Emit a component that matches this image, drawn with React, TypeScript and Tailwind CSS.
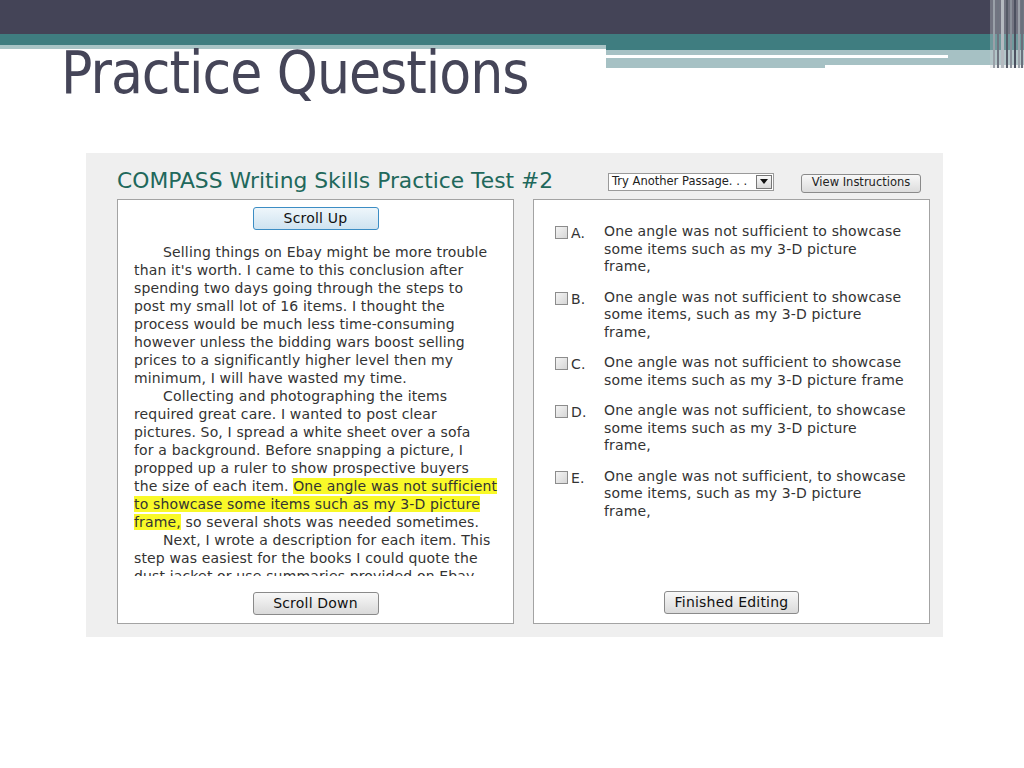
import React from "react";

const passage: { text: React.ReactNode; indent?: boolean }[] = [
  { text: "Selling things on Ebay might be more trouble", indent: true },
  { text: "than it's worth. I came to this conclusion after" },
  { text: "spending two days going through the steps to" },
  { text: "post my small lot of 16 items. I thought the" },
  { text: "process would be much less time-consuming" },
  { text: "however unless the bidding wars boost selling" },
  { text: "prices to a significantly higher level then my" },
  { text: "minimum, I will have wasted my time." },
  { text: "Collecting and photographing the items", indent: true },
  { text: "required great care. I wanted to post clear" },
  { text: "pictures. So, I spread a white sheet over a sofa" },
  { text: "for a background. Before snapping a picture, I" },
  { text: "propped up a ruler to show prospective buyers" },
  {
    text: (
      <>
        the size of each item.{" "}
        <span className="bg-[#f9f928]">One angle was not sufficient</span>
      </>
    ),
  },
  { text: <span className="bg-[#f9f928]">to showcase some items such as my 3-D picture</span> },
  {
    text: (
      <>
        <span className="bg-[#f9f928]">frame,</span> so several shots was needed sometimes.
      </>
    ),
  },
  { text: "Next, I wrote a description for each item. This", indent: true },
  { text: "step was easiest for the books I could quote the" },
  { text: "dust jacket or use summaries provided on Ebay" },
];

const options: { letter: string; lines: string[] }[] = [
  { letter: "A.", lines: ["One angle was not sufficient to showcase", "some items such as my 3-D picture", "frame,"] },
  { letter: "B.", lines: ["One angle was not sufficient to showcase", "some items, such as my 3-D picture", "frame,"] },
  { letter: "C.", lines: ["One angle was not sufficient to showcase", "some items such as my 3-D picture frame"] },
  { letter: "D.", lines: ["One angle was not sufficient, to showcase", "some items such as my 3-D picture", "frame,"] },
  { letter: "E.", lines: ["One angle was not sufficient, to showcase", "some items, such as my 3-D picture", "frame,"] },
];

function Btn({ children, w, focused }: { children: React.ReactNode; w: string; focused?: boolean }) {
  return (
    <div
      className={`${w} h-[23px] flex items-center justify-center rounded-[3px] border text-[14px] tracking-[0.2px] text-[#111] ${
        focused
          ? "border-[#3c8dc4] bg-gradient-to-b from-[#eef6fb] to-[#cfe3f0]"
          : "border-[#8a8a8a] bg-gradient-to-b from-[#f8f8f8] to-[#dadada]"
      }`}
    >
      {children}
    </div>
  );
}

export default function App() {
  return (
    <div
      className="w-[1024px] h-[768px] bg-white relative overflow-hidden"
      style={{ fontFamily: '"DejaVu Sans", Verdana, sans-serif' }}
    >
      {/* header decoration */}
      <div className="h-[34px] bg-[#444457]" />
      <div className="flex">
        <div className="w-[606px] flex flex-col">
          <div className="h-[11px] bg-[#3f7d80]" />
          <div className="h-[4px] bg-[#a9c4c6]" />
        </div>
        <div className="flex-1 flex flex-col">
          <div className="h-[16px] bg-[#3f7d80]" />
          <div className="h-[15px] bg-[#a6c1c4] pt-[5px]">
            <div className="w-[342px] h-[3px] bg-white" />
          </div>
          <div className="w-[219px] h-[3px] bg-[#a6c1c4]" />
        </div>
      </div>
      <svg className="absolute right-0 top-0" width="34" height="70" viewBox="0 0 34 70">
        <rect x="0" y="0" width="34" height="68" fill="#c9cdd0" opacity="0.35" />
        <rect x="3" y="0" width="2" height="68" fill="#9aa0a8" />
        <rect x="7" y="0" width="2" height="68" fill="#6f7480" />
        <rect x="11" y="0" width="3" height="68" fill="#b5bac0" />
        <rect x="16" y="0" width="2" height="68" fill="#555a66" />
        <rect x="20" y="0" width="2" height="68" fill="#8a909a" />
        <rect x="24" y="0" width="2" height="68" fill="#4c5160" />
        <rect x="28" y="0" width="2" height="68" fill="#9ca2aa" />
        <rect x="31" y="0" width="2" height="68" fill="#6a707c" />
      </svg>

      {/* title */}
      <div
        className="absolute left-[61px] top-[42px] text-[58px] leading-[62px] tracking-[-1px] text-[#454558]"
        style={{ fontFamily: '"DejaVu Sans Condensed", "DejaVu Sans", sans-serif', fontStretch: "condensed" }}
      >
        Practice Questions
      </div>

      {/* main panel */}
      <div className="absolute left-[86px] top-[153px] w-[857px] h-[484px] bg-[#efefef] pl-[31px] pr-[13px] flex flex-col">
        <div className="h-[46px] flex items-center">
          <div className="text-[21.8px] text-[#21685b] w-[491px] pt-[10px] whitespace-nowrap">
            COMPASS Writing Skills Practice Test #2
          </div>
          <div className="mt-[11px] w-[166px] h-[18px] bg-white border border-[#9a9a9a] flex items-center justify-between pl-[3px] pr-[1px]">
            <span className="text-[11.5px] text-[#222]">Try Another Passage. . .</span>
            <div className="w-[16px] h-[14px] border border-[#777] bg-gradient-to-b from-[#fafafa] to-[#d8d8d8] flex items-center justify-center">
              <svg width="8" height="5" viewBox="0 0 8 5">
                <path d="M0 0 L8 0 L4 5 Z" fill="#111" />
              </svg>
            </div>
          </div>
          <div className="ml-[27px] mt-[14px] w-[120px] h-[19px] rounded-[3px] border border-[#8a8a8a] bg-gradient-to-b from-[#f8f8f8] to-[#dcdcdc] flex items-center justify-center text-[11.5px] text-[#222]">
            View Instructions
          </div>
        </div>
        <div className="flex gap-[19px] h-[425px]">
          {/* passage box */}
          <div className="w-[397px] h-full bg-white border border-[#a3a3a3] flex flex-col items-center pt-[7px]">
            <Btn w="w-[126px]" focused>
              Scroll Up
            </Btn>
            <div className="mt-[13px] h-[333px] w-full overflow-hidden pl-[16px] text-[14px] tracking-[0.15px] leading-[18px] text-[#333]">
              {passage.map((l, i) => (
                <div key={i} className={`whitespace-nowrap ${l.indent ? "pl-[29px]" : ""}`}>
                  {l.text}
                </div>
              ))}
            </div>
            <div className="mt-[16px]">
              <Btn w="w-[126px]">Scroll Down</Btn>
            </div>
          </div>
          {/* options box */}
          <div className="w-[397px] h-full bg-white border border-[#a3a3a3] flex flex-col pt-[23px] pl-[21px]">
            <div className="flex flex-col gap-[13px]">
              {options.map((o) => (
                <div key={o.letter} className="flex text-[14px] tracking-[0.15px] leading-[17.5px] text-[#333]">
                  <div className="w-[49px] flex items-start">
                    <div className="mt-[3px] w-[13px] h-[13px] border border-[#8c8c8c] bg-gradient-to-br from-[#f4f4f4] to-[#d6d6d6]" />
                    <span className="ml-[3px] mt-[2px]">{o.letter}</span>
                  </div>
                  <div>
                    {o.lines.map((t, j) => (
                      <div key={j} className="whitespace-nowrap">
                        {t}
                      </div>
                    ))}
                  </div>
                </div>
              ))}
            </div>
            <div className="mt-auto mb-[9px] flex justify-center pr-[21px]">
              <Btn w="w-[135px]">Finished Editing</Btn>
            </div>
          </div>
        </div>
      </div>
    </div>
  );
}
